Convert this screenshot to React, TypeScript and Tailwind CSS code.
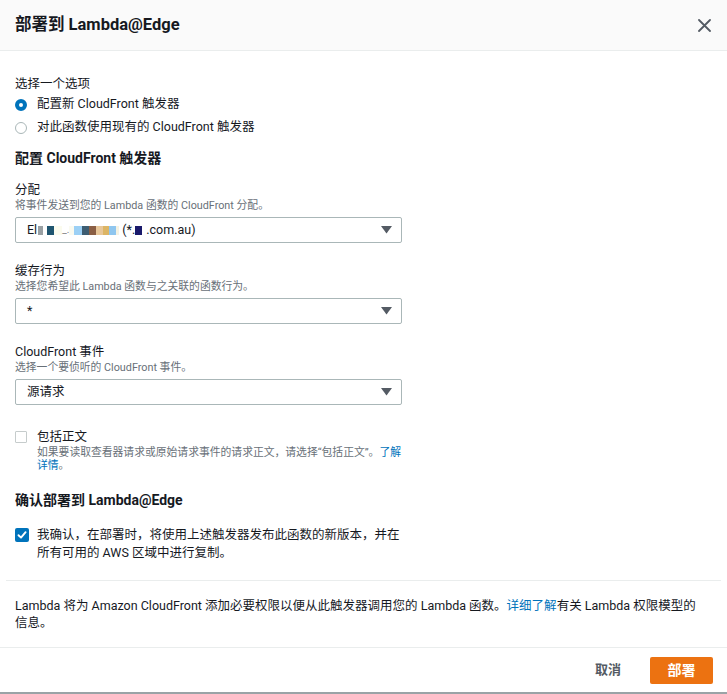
import React from "react";

const Caret = () => (
  <svg width="11" height="8" viewBox="0 0 11 8" className="shrink-0">
    <polygon points="0,0 11,0 5.5,7.5" fill="#545b64" />
  </svg>
);

const Select = ({ children }: { children: React.ReactNode }) => (
  <div className="mt-[3px] h-[26px] w-[387px] border border-[#aab7b8] rounded-[2px] flex items-center justify-between pl-[11px] pr-[9px] text-[12.5px] text-[#16191f]">
    <div className="flex items-center">{children}</div>
    <Caret />
  </div>
);

const Field = ({ label, sub, children, first }: { label: string; sub: string; children: React.ReactNode; first?: boolean }) => (
  <div className={first ? "mt-[14px]" : "mt-[20px]"}>
    <div className="text-[12.5px] leading-[16px] text-[#16191f]">{label}</div>
    <div className="text-[10.8px] leading-[16px] text-[#687078]">{sub}</div>
    {children}
  </div>
);

const Blk = ({ c, w }: { c: string; w: number }) => (
  <span className="inline-block h-[9px]" style={{ backgroundColor: c, width: w }} />
);

export default function App() {
  return (
    <div
      className="w-[727px] h-[694px] bg-white flex flex-col text-[#16191f]"
      style={{ fontFamily: 'Roboto, "Noto Sans CJK SC", sans-serif' }}
    >
      <div className="h-[51px] shrink-0 bg-[#fafafa] border-b border-[#eaeded] flex items-center justify-between pl-[15px] pr-[16px]">
        <div className="text-[16.5px] font-bold leading-[20px]">部署到 Lambda@Edge</div>
        <svg width="13" height="13" viewBox="0 0 13 13">
          <path d="M1 1 L12 12 M12 1 L1 12" stroke="#545b64" strokeWidth="1.8" strokeLinecap="round" />
        </svg>
      </div>

      <div className="px-[15px] pt-[24px]">
        <div className="text-[12.5px] leading-[18px]">选择一个选项</div>
        <div className="h-[23px] flex items-center">
          <span className="w-[12px] h-[12px] rounded-full border-[4px] border-[#0073bb] bg-white shrink-0" />
          <span className="ml-[10px] text-[12.5px]">配置新 CloudFront 触发器</span>
        </div>
        <div className="h-[23px] flex items-center">
          <span className="w-[12px] h-[12px] rounded-full border border-[#aab7b8] bg-white shrink-0" />
          <span className="ml-[10px] text-[12.5px]">对此函数使用现有的 CloudFront 触发器</span>
        </div>

        <div className="mt-[9px] text-[14px] leading-[20px] font-bold">配置 CloudFront 触发器</div>

        <Field first label="分配" sub="将事件发送到您的 Lambda 函数的 CloudFront 分配。">
          <Select>
            <span>El</span>
            <span className="ml-[1px] flex items-center">
              <Blk c="#9aa0a3" w={5} />
              <span className="w-[4px]" />
              <Blk c="#1f5570" w={7} />
              <Blk c="#fbfbee" w={8} />
              <span className="text-[10px] leading-[8px] text-[#888]">_.</span>
              <Blk c="#fafaf0" w={5} />
              <Blk c="#9cd0f5" w={8} />
              <Blk c="#3d5d72" w={7} />
              <Blk c="#8a5e44" w={7} />
              <Blk c="#e8c79a" w={7} />
              <Blk c="#dcb565" w={6} />
              <Blk c="#8fc6ef" w={7} />
              <Blk c="#f5f2e2" w={3} />
            </span>
            <span className="ml-[3px]">(*.</span>
            <Blk c="#1a1a6b" w={7} />
            <span className="ml-[4px]">.com.au)</span>
          </Select>
        </Field>

        <Field label="缓存行为" sub="选择您希望此 Lambda 函数与之关联的函数行为。">
          <Select>
            <span>*</span>
          </Select>
        </Field>

        <Field label="CloudFront 事件" sub="选择一个要侦听的 CloudFront 事件。">
          <Select>
            <span>源请求</span>
          </Select>
        </Field>

        <div className="mt-[23px] h-[18px] flex items-center">
          <span className="w-[12px] h-[12px] border border-[#c6cccc] rounded-[1px] bg-white shrink-0" />
          <span className="ml-[10px] text-[12.5px]">包括正文</span>
        </div>
        <div className="ml-[22px] text-[10.8px] leading-[13px] text-[#687078] whitespace-nowrap">
          如果要读取查看器请求或原始请求事件的请求正文，请选择“包括正文”。<span className="text-[#0073bb]">了解</span>
          <br />
          <span className="text-[#0073bb]">详情</span>。
        </div>

        <div className="mt-[18px] text-[14px] leading-[20px] font-bold">确认部署到 Lambda@Edge</div>

        <div className="mt-[16px] flex items-start">
          <span className="mt-[2px] w-[14px] h-[14px] rounded-[2px] bg-[#0073bb] flex items-center justify-center shrink-0">
            <svg width="10" height="10" viewBox="0 0 10 10">
              <path d="M1.5 5.2 L4 7.6 L8.6 2.2" stroke="white" strokeWidth="1.9" fill="none" strokeLinecap="round" strokeLinejoin="round" />
            </svg>
          </span>
          <span className="ml-[8px] text-[12.5px] leading-[18px] whitespace-nowrap">
            我确认，在部署时，将使用上述触发器发布此函数的新版本，并在
            <br />
            所有可用的 AWS 区域中进行复制。
          </span>
        </div>
      </div>

      <div className="mt-[18px] mx-[6px] border-t border-[#eaeded]" />

      <div className="px-[15px] pt-[16px] pb-[16px] text-[12.5px] leading-[17px] whitespace-nowrap">
        Lambda 将为 Amazon CloudFront 添加必要权限以便从此触发器调用您的 Lambda 函数。
        <span className="text-[#0073bb]">详细了解</span>有关 Lambda 权限模型的
        <br />
        信息。
      </div>

      <div className="border-t border-[#eaeded] flex-1 flex items-center justify-end pr-[14px] border-b-2 border-b-[#9aa3a6]">
        <span className="text-[13px] font-bold text-[#545b64] mr-[29px]">取消</span>
        <span className="w-[63px] h-[27px] bg-[#ec7211] rounded-[2px] text-white text-[14px] font-bold flex items-center justify-center">
          部署
        </span>
      </div>
    </div>
  );
}
